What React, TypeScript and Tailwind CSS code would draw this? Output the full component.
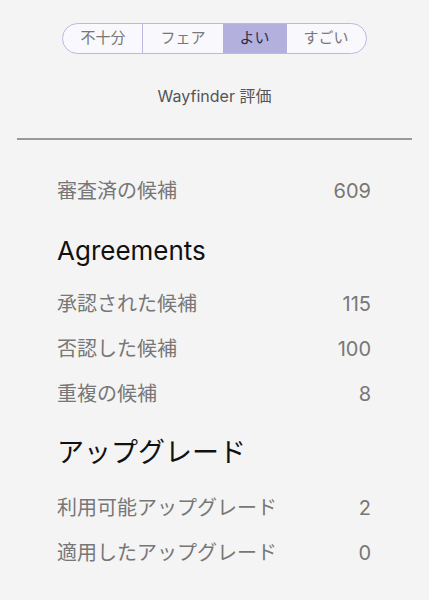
const font = { fontFamily: 'Inter, "Noto Sans CJK JP", sans-serif' };

const segments = ["不十分", "フェア", "よい", "すごい"];
const active = 2;

function Row({ label, value }: { label: string; value: string }) {
  return (
    <div className="flex h-[45px] items-center justify-between text-[20px] text-[#777]">
      <span>{label}</span>
      <span>{value}</span>
    </div>
  );
}

export default function App() {
  return (
    <div className="min-h-[600px] w-[429px] bg-[#f4f4f4]" style={font}>
      <div className="flex justify-center pt-[23px]">
        <div className="flex h-[31px] overflow-hidden rounded-full border-[1.5px] border-[#bcb8e2] bg-[#f9f8fc]">
          {segments.map((s, i) => (
            <div
              key={s}
              className={
                i === active
                  ? "flex items-center bg-[#b3b0de] px-[17px] text-[15px] text-[#2e2c4a]"
                  : i === 0
                  ? "flex items-center border-r-[1.5px] border-[#bcb8e2] px-[17px] text-[15px] text-[#777]"
                  : "flex items-center px-[17px] text-[15px] text-[#777]"
              }
            >
              {s}
            </div>
          ))}
        </div>
      </div>
      <div className="mt-[32px] text-center text-[16px] leading-[20px] text-[#555]">Wayfinder 評価</div>
      <div className="mx-[17px] mt-[32px] h-[2px] bg-[#999]" />

      <div className="pl-[57px] pr-[58px] pt-[28px]">
        <Row label="審査済の候補" value="609" />
        <div className="pb-[12px] pt-[20px] text-[26px] leading-[36px] text-[#111]">Agreements</div>
        <Row label="承認された候補" value="115" />
        <Row label="否認した候補" value="100" />
        <Row label="重複の候補" value="8" />
        <div className="pb-[12px] pt-[17px] text-[27px] leading-[40px] text-[#111]">アップグレード</div>
        <Row label="利用可能アップグレード" value="2" />
        <Row label="適用したアップグレード" value="0" />
      </div>
    </div>
  );
}
